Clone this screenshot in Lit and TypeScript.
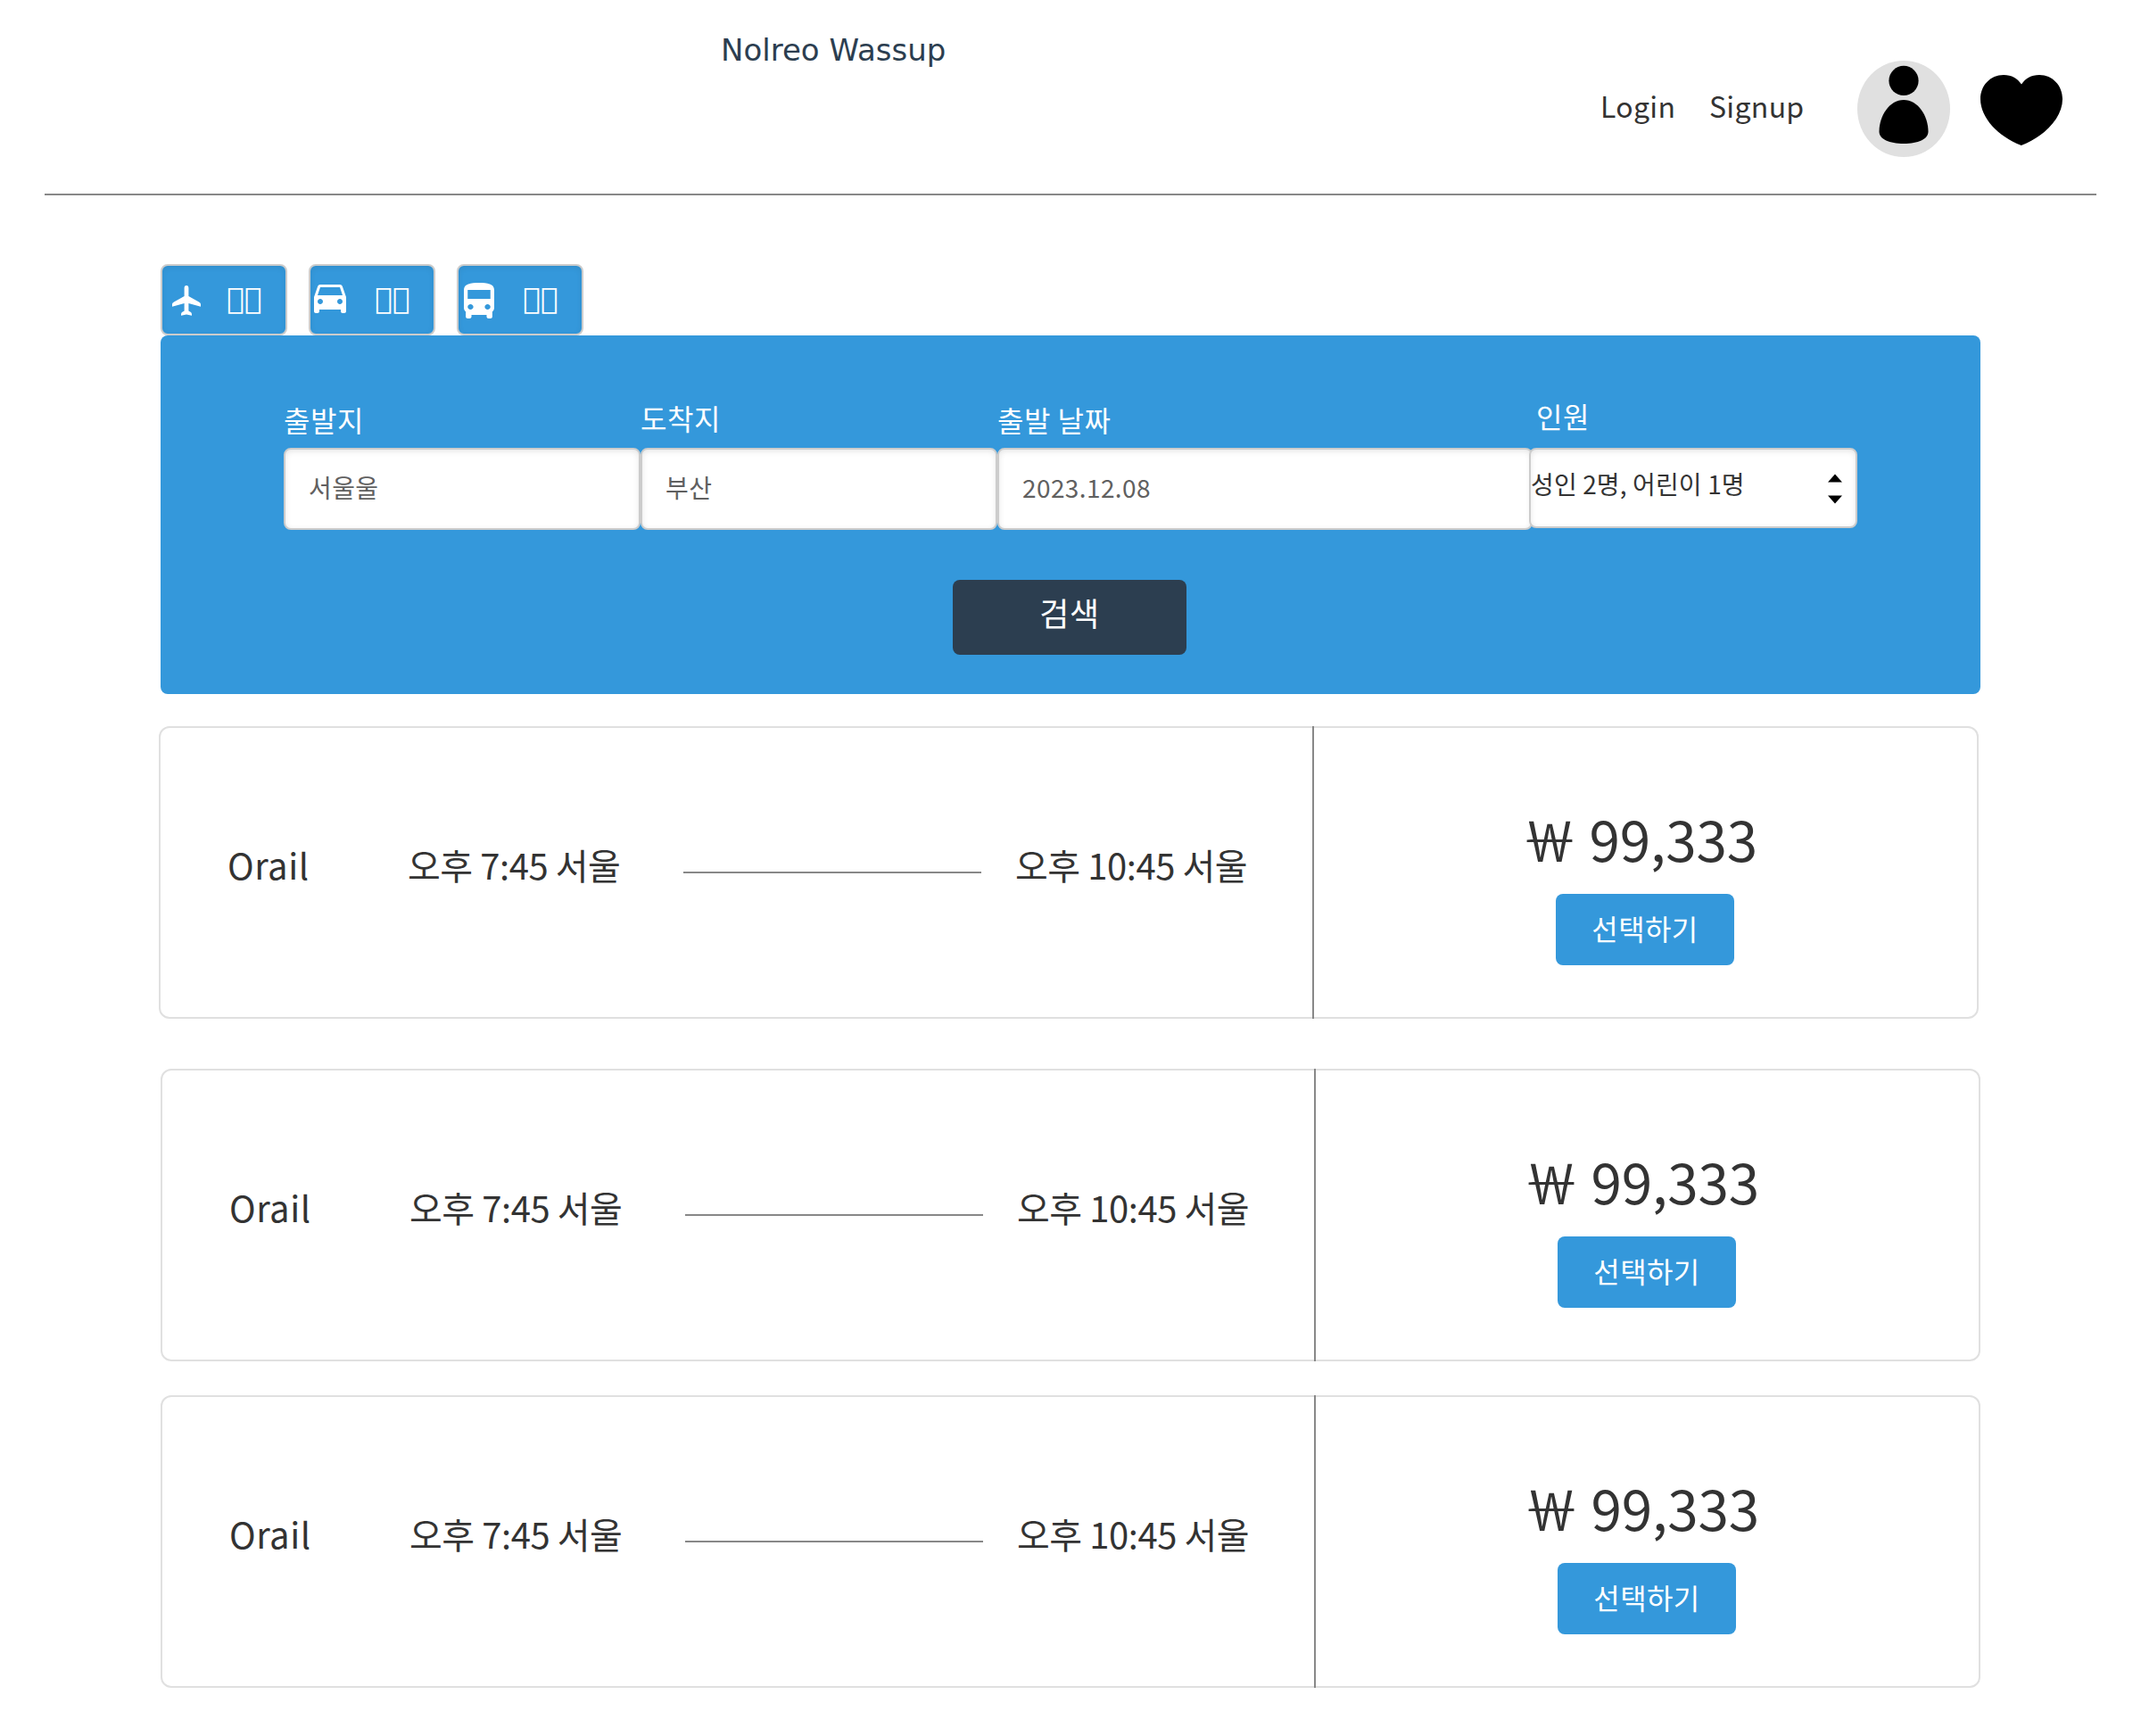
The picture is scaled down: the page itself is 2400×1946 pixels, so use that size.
import { LitElement, html, css, svg } from "lit";
import { customElement, property } from "lit/decorators.js";

const plane = svg`<svg class="icon plane" viewBox="0 0 34 34"><path fill="#fff" d="M17 0c1.600 0 2.400 1.200 2.400 2.800V12L31 18.500c1.500.9 2 1.700 2 3v2.200L19.400 20v8.600l2.200 1.200c1 .7 1.400 1.500 1.400 3v1L17 32.600 11 33.800v-1c0-1.500.4-2.300 1.400-3l2.200-1.200V20L1 23.700V21.500c0-1.300.5-2.100 2-3L14.600 12V2.800C14.600 1.200 15.400 0 17 0z"/></svg>`;
const car = svg`<svg class="icon car" viewBox="3 5 18 16" preserveAspectRatio="none"><path fill="#fff" d="M18.920 6.010C18.720 5.420 18.160 5 17.500 5h-11c-.66 0-1.210.42-1.420 1.010L3 12v8c0 .55.45 1 1 1h1c.55 0 1-.45 1-1v-1h12v1c0 .55.45 1 1 1h1c.55 0 1-.45 1-1v-8l-2.080-5.990zM6.500 16c-.83 0-1.500-.67-1.500-1.500S5.670 13 6.500 13s1.500.67 1.500 1.500S7.330 16 6.500 16zm11 0c-.83 0-1.500-.67-1.500-1.500s.67-1.500 1.500-1.500 1.500.67 1.500 1.500-.67 1.500-1.500 1.500zM5 11l1.500-4.500h11L19 11H5z"/></svg>`;
const bus = svg`<svg class="icon bus" viewBox="4 2 16 20" preserveAspectRatio="none"><path fill="#fff" d="M4 16c0 .88.39 1.670 1 2.220V21c0 .55.45 1 1 1h1c.55 0 1-.45 1-1v-1h8v1c0 .55.45 1 1 1h1c.55 0 1-.45 1-1v-2.780c.61-.55 1-1.340 1-2.220V6c0-3.500-3.580-4-8-4s-8 .5-8 4v10zm3.500 1c-.83 0-1.500-.67-1.500-1.500S6.670 14 7.500 14s1.500.67 1.500 1.500S8.330 17 7.500 17zm9 0c-.83 0-1.500-.67-1.500-1.500s.67-1.500 1.500-1.500 1.500.67 1.500 1.500-.67 1.500-1.500 1.500zm1.500-6H6V6h12v5z"/></svg>`;

@customElement("trip-card")
class TripCard extends LitElement {
  @property() carrier = "";
  @property() depart = "";
  @property() arrive = "";
  @property() price = "";

  static styles = css`
    :host {
      display: flex;
      box-sizing: border-box;
      width: 2040px;
      height: 328px;
      border: 2px solid #e0e0e0;
      border-radius: 12px;
      color: #333;
      white-space: nowrap;
    }
    .trip {
      flex: none;
      box-sizing: border-box;
      width: 1291px;
      padding: 123px 0 0 75px;
      display: flex;
      align-items: flex-start;
      font-size: 40px;
      line-height: 60px;
      letter-spacing: -0.45px;
    }
    .carrier { width: 202px; letter-spacing: 0.5px; }
    .depart { width: 309px; }
    .line { width: 334px; height: 2px; margin: 38px 38px 0 0; background: #888; }
    .divider { flex: none; width: 2px; height: 328px; margin: -2px 0; background: #888; }
    .offer {
      padding: 77px 0 0 233px;
      display: flex;
      flex-direction: column;
      align-items: flex-start;
    }
    .price { height: 109px; font-size: 62px; line-height: 92px; letter-spacing: -0.15px; }
    .select {
      width: 200px;
      height: 80px;
      margin-left: 38px;
      border: 0;
      padding: 0 0 4px;
      border-radius: 8px;
      background: #3498db;
      color: #fff;
      font: inherit;
      font-size: 32px;
      line-height: 76px;
      letter-spacing: 0.4px;
      text-align: center;
    }
  `;

  render() {
    return html`
      <div class="trip">
        <span class="carrier">${this.carrier}</span>
        <span class="depart">${this.depart}</span>
        <span class="line"></span>
        <span class="arrive">${this.arrive}</span>
      </div>
      <div class="divider"></div>
      <div class="offer">
        <span class="price">${this.price}</span>
        <button class="select">선택하기</button>
      </div>
    `;
  }
}

@customElement("app-root")
class AppRoot extends LitElement {
  static styles = css`
    :host {
      display: block;
      width: 2400px;
      height: 1946px;
      overflow: hidden;
      background: #fff;
      color: #333;
      font-family: "Noto Sans CJK KR", sans-serif;
      white-space: nowrap;
    }
    header {
      box-sizing: border-box;
      height: 219px;
      margin: 0 50px;
      border-bottom: 2px solid #888;
      display: flex;
      align-items: flex-start;
    }
    .brand {
      margin: 34px 0 0 758px;
      width: 986px;
      font: 34px/44px "DejaVu Sans", sans-serif;
      color: #2c3e50;
    }
    .nav { display: flex; margin-top: 94px; font-size: 32px; line-height: 48px; letter-spacing: 0.3px; }
    .login { width: 122px; }
    .signup { width: 166px; }
    .avatar { width: 104px; height: 108px; margin-top: 68px; }
    .heart { width: 93px; height: 80px; margin: 84px 0 0 34px; }
    .tabs { display: flex; gap: 24px; margin: 77px 0 0 180px; }
    .tab {
      box-sizing: border-box;
      width: 142px;
      height: 80px;
      border: 2px solid #ccc;
      border-radius: 8px;
      background: #3498db;
      box-shadow: inset 0 2px 6px rgba(0, 0, 0, 0.08);
      display: flex;
      align-items: flex-start;
      color: #fff;
    }
    .glyph { width: 72px; flex: none; display: flex; }
    .icon { display: block; }
    .plane { width: 34px; height: 34px; margin: 22px 0 0 10px; }
    .car { width: 36px; height: 32px; margin: 21px 0 0 4px; }
    .bus { width: 34px; height: 40px; margin: 19px 0 0 6px; }
    .mode { font: 33px/40px "DejaVu Sans", sans-serif; margin-top: 17px; }
    .search {
      box-sizing: border-box;
      width: 2040px;
      height: 402px;
      margin-left: 180px;
      padding: 70px 0 0 138px;
      border-radius: 8px;
      background: #3498db;
    }
    .fields { display: flex; height: 204px; }
    .field { width: 400px; flex: none; }
    .date { width: 600px; }
    .people { width: 368px; margin-left: -4px; }
    .label { height: 56px; box-sizing: border-box; font-size: 32px; line-height: 48px; letter-spacing: 0.5px; color: #fff; }
    .to .label { margin-top: -2px; height: 58px; }
    .people .label { padding-left: 8px; margin-top: -4px; height: 60px; }
    .box {
      box-sizing: border-box;
      height: 92px;
      border: 2px solid #ccc;
      border-radius: 8px;
      background: #fff;
      box-shadow: inset 0 2px 6px rgba(0, 0, 0, 0.1);
      padding-left: 26px;
      font-size: 28px;
      line-height: 84px;
      letter-spacing: 0.4px;
      color: #606060;
    }
    .people .box {
      height: 90px;
      padding: 0 15px 0 0;
      display: flex;
      justify-content: space-between;
      line-height: 76px;
      letter-spacing: 0.13px;
      color: #333;
    }
    .spin { width: 16px; height: 34px; margin-top: 27px; fill: #000; }
    .go {
      display: block;
      width: 262px;
      height: 84px;
      margin-left: 750px;
      border: 0;
      padding: 0 0 12px;
      border-radius: 8px;
      background: #2c3e50;
      color: #fff;
      font: inherit;
      font-size: 36px;
      line-height: 72px;
      letter-spacing: 0.6px;
    }
    .results { padding: 36px 0 0 180px; display: flex; flex-direction: column; }
    .first { margin: 0 0 56px -2px; }
    .second { margin-bottom: 38px; }
  `;

  private card(cls: string) {
    return html`<trip-card
      class=${cls}
      carrier="Orail"
      depart="오후 7:45 서울"
      arrive="오후 10:45 서울"
      price="￦ 99,333"
    ></trip-card>`;
  }

  render() {
    return html`
      <header>
        <div class="brand">Nolreo Wassup</div>
        <nav class="nav"><span class="login">Login</span><span class="signup">Signup</span></nav>
        <svg class="avatar" viewBox="0 0 104 108">
          <ellipse cx="52" cy="54" rx="52" ry="54" fill="#e0e0e0" />
          <circle cx="52" cy="22.400" r="16.600" />
          <path d="M52 44C68 44 79.500 62 79.500 79.500C79.500 88 68 93 52 93S24.500 88 24.500 79.500C24.500 62 36 44 52 44z" />
        </svg>
        <svg class="heart" viewBox="0 0 93 80">
          <path d="M46 10.500C50.500 4 57 0 66 0C81 0 92 12 92 27C92 48 72 69 45.800 79C20 69 0 48 0 27C0 12 11 0 26 0C35 0 41.500 4 46 10.500z" />
        </svg>
      </header>
      <div class="tabs">
        <div class="tab"><span class="glyph">${plane}</span><span class="mode">&#xE2E5;&#xE2E6;</span></div>
        <div class="tab"><span class="glyph">${car}</span><span class="mode">&#xE2E5;&#xE2E6;</span></div>
        <div class="tab"><span class="glyph">${bus}</span><span class="mode">&#xE2E5;&#xE2E6;</span></div>
      </div>
      <section class="search">
        <div class="fields">
          <div class="field from"><div class="label">출발지</div><div class="box">서울울</div></div>
          <div class="field to"><div class="label">도착지</div><div class="box">부산</div></div>
          <div class="field date"><div class="label">출발 날짜</div><div class="box">2023.12.08</div></div>
          <div class="field people">
            <div class="label">인원</div>
            <div class="box">
              <span>성인 2명, 어린이 1명</span>
              <svg class="spin" viewBox="0 0 16 34">
                <path d="M8 0.500L16 9.500H0zM0 24.500H16L8 33.500z" />
              </svg>
            </div>
          </div>
        </div>
        <button class="go">검색</button>
      </section>
      <main class="results">${this.card("first")}${this.card("second")}${this.card("third")}</main>
    `;
  }
}
